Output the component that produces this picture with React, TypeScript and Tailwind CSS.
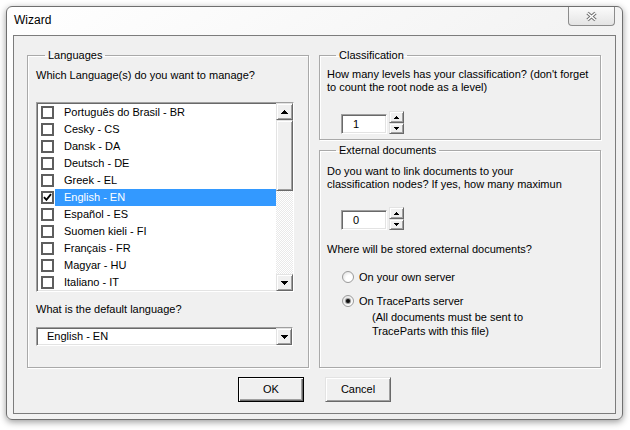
import React from "react";

// classic win32 3D edges
const raised =
  "bg-[#f0f0f0] border border-t-[#e3e3e3] border-l-[#e3e3e3] border-r-[#696969] border-b-[#696969] shadow-[inset_1px_1px_0_#ffffff,inset_-1px_-1px_0_#a0a0a0]";
const sunken =
  "bg-white border border-t-[#a0a0a0] border-l-[#a0a0a0] border-r-white border-b-white shadow-[inset_1px_1px_0_#696969,inset_-1px_-1px_0_#e3e3e3]";

const languages = [
  "Português do Brasil - BR",
  "Cesky - CS",
  "Dansk - DA",
  "Deutsch - DE",
  "Greek - EL",
  "English - EN",
  "Español - ES",
  "Suomen kieli - FI",
  "Français - FR",
  "Magyar - HU",
  "Italiano - IT",
];

const Arrow = ({ dir, small }: { dir: "up" | "down"; small?: boolean }) => {
  const rows = small ? [1, 3, 5] : [1, 3, 5, 7];
  const w = rows[rows.length - 1];
  const ordered = dir === "up" ? rows : [...rows].reverse();
  return (
    <svg width={w} height={rows.length} viewBox={`0 0 ${w} ${rows.length}`} shapeRendering="crispEdges">
      {ordered.map((r, i) => (
        <rect key={i} x={(w - r) / 2} y={i} width={r} height={1} fill="#000" />
      ))}
    </svg>
  );
};

const CheckBox = ({ checked }: { checked?: boolean }) => (
  <div className="w-[13px] h-[13px] shrink-0 border-2 border-[#5e5e5e] bg-white flex items-center justify-center">
    {checked && (
      <svg width="9" height="9" viewBox="0 0 9 9">
        <path d="M1 4.2L3.4 6.8L8 1.2" stroke="#000" strokeWidth="1.9" fill="none" />
      </svg>
    )}
  </div>
);

const Radio = ({ checked }: { checked?: boolean }) => (
  <div className="w-[12px] h-[12px] shrink-0 rounded-full border border-[#9a9a9a] bg-[radial-gradient(circle_at_65%_65%,#ffffff_35%,#d9d9d9_100%)] flex items-center justify-center">
    {checked && <div className="w-[4px] h-[4px] rounded-full bg-[#111] shadow-[0_0_1px_1px_#8a8a8a]" />}
  </div>
);

const Spinner = ({ value }: { value: string }) => (
  <div className="flex items-end gap-[2px] ml-[14px]">
    <div className={`${sunken} w-[46px] h-[20px] pl-[11px] leading-[18px]`}>{value}</div>
    <div className="flex flex-col">
      <div className={`${raised} w-[15px] h-[12px] flex items-center justify-center`}>
        <Arrow dir="up" small />
      </div>
      <div className={`${raised} w-[15px] h-[11px] flex items-center justify-center`}>
        <Arrow dir="down" small />
      </div>
    </div>
  </div>
);

const Legend = ({ children }: { children: React.ReactNode }) => (
  <legend className="ml-[9px] px-[3px] leading-[14px]">{children}</legend>
);

export default function App() {
  return (
    <div className="w-[630px] h-[430px] bg-white pt-[6px] pl-[6px] text-[11px] text-black font-['Liberation_Sans',Arial,sans-serif]">
      <div className="w-[617px] h-[414px] rounded-[6px] border border-[#6f6f6f] bg-linear-to-br from-[#ffffff] via-[#f3f3f3] to-[#ebebeb] shadow-[0_2px_7px_rgba(0,0,0,0.4)] flex flex-col">
        {/* title bar */}
        <div className="h-[28px] shrink-0 flex justify-between">
          <div className="pl-[7px] mt-[6px] text-[12px] leading-[14px]">Wizard</div>
          <div className="mr-[7px] w-[47px] h-[19px] rounded-b-[4px] border border-t-0 border-[#8c8c8c] bg-linear-to-b from-[#fbfbfb] to-[#e4e4e4] flex items-center justify-center">
            <svg width="13" height="11" viewBox="0 0 13 11">
              <path d="M2.5 2L10.5 9M10.5 2L2.5 9" stroke="#707070" strokeWidth="3.4" />
              <path d="M2.5 2L10.5 9M10.5 2L2.5 9" stroke="#ffffff" strokeWidth="1.5" />
            </svg>
          </div>
        </div>

        {/* client area */}
        <div className="mx-[6px] mb-[5px] h-[379px] border border-[#7c7c7c] bg-[#f0f0f0] pt-[12px] pl-[13px] flex flex-col">
          <div className="flex gap-[10px]">
            {/* Languages */}
            <fieldset className="w-[282px] h-[320px] border border-[#a9a9a9] shadow-[1px_1px_0_#fff,inset_1px_1px_0_#fff] pl-[8px]">
              <Legend>Languages</Legend>
              <div className="mt-[6px] leading-[14px]">Which Language(s) do you want to manage?</div>
              <div className={`${sunken} mt-[20px] w-[258px] h-[190px] flex overflow-hidden`}>
                <div className="flex-1 pt-[1px]">
                  {languages.map((l) => {
                    const sel = l === "English - EN";
                    return (
                      <div key={l} className="h-[17px] flex items-center pl-[4px] gap-[1px]">
                        <CheckBox checked={sel} />
                        <div
                          className={`flex-1 h-[17px] pl-[9px] leading-[17px] whitespace-nowrap ${
                            sel ? "bg-[#3399ff] text-white" : ""
                          }`}
                        >
                          {l}
                        </div>
                      </div>
                    );
                  })}
                </div>
                <div className="w-[17px] flex flex-col">
                  <div className={`${raised} h-[17px] flex items-center justify-center`}>
                    <Arrow dir="up" />
                  </div>
                  <div className={`${raised} h-[71px]`} />
                  <div className="flex-1 bg-[repeating-conic-gradient(#ffffff_0%_25%,#e9e9e9_0%_50%)] bg-[length:2px_2px]" />
                  <div className={`${raised} h-[17px] flex items-center justify-center`}>
                    <Arrow dir="down" />
                  </div>
                </div>
              </div>
              <div className="mt-[10px] leading-[14px]">What is the default language?</div>
              <div className={`${sunken} mt-[11px] w-[257px] h-[19px] flex`}>
                <div className="flex-1 pl-[10px] leading-[17px]">English - EN</div>
                <div className={`${raised} w-[16px] flex items-center justify-center`}>
                  <Arrow dir="down" />
                </div>
              </div>
            </fieldset>

            <div className="flex flex-col">
              {/* Classification */}
              <fieldset className="w-[282px] h-[92px] border border-[#a9a9a9] shadow-[1px_1px_0_#fff,inset_1px_1px_0_#fff] pl-[7px]">
                <Legend>Classification</Legend>
                <div className="mt-[6px] leading-[13px]">
                  How many levels has your classification? (don't forget
                  <br />
                  to count the root node as a level)
                </div>
                <div className="mt-[17px]">
                  <Spinner value="1" />
                </div>
              </fieldset>

              {/* External documents */}
              <fieldset className="mt-[3px] w-[282px] h-[225px] border border-[#a9a9a9] shadow-[1px_1px_0_#fff,inset_1px_1px_0_#fff] pl-[7px]">
                <Legend>External documents</Legend>
                <div className="mt-[8px] leading-[13px]">
                  Do you want to link documents to your
                  <br />
                  classification nodes? If yes, how many maximun
                </div>
                <div className="mt-[16px]">
                  <Spinner value="0" />
                </div>
                <div className="mt-[12px] leading-[14px]">Where will be stored external documents?</div>
                <div className="mt-[14px] ml-[15px] h-[14px] flex items-center gap-[5px]">
                  <Radio />
                  <span className="leading-[14px]">On your own server</span>
                </div>
                <div className="mt-[10px] ml-[15px] h-[14px] flex items-center gap-[5px]">
                  <Radio checked />
                  <span className="leading-[14px]">On TraceParts server</span>
                </div>
                <div className="mt-[2px] ml-[45px] leading-[14px]">
                  (All documents must be sent to
                  <br />
                  TraceParts with this file)
                </div>
              </fieldset>
            </div>
          </div>

          {/* buttons */}
          <div className="mt-[9px] flex justify-center gap-[21px] pr-[13px]">
            <div className="w-[66px] h-[25px] border border-black bg-[#f0f0f0] p-0">
              <div className="h-full shadow-[inset_1px_1px_0_#ffffff,inset_-1px_-1px_0_#696969,inset_-2px_-2px_0_#a0a0a0] flex items-center justify-center">
                OK
              </div>
            </div>
            <div className={`${raised} w-[66px] h-[25px] flex items-center justify-center`}>Cancel</div>
          </div>
        </div>
      </div>
    </div>
  );
}
